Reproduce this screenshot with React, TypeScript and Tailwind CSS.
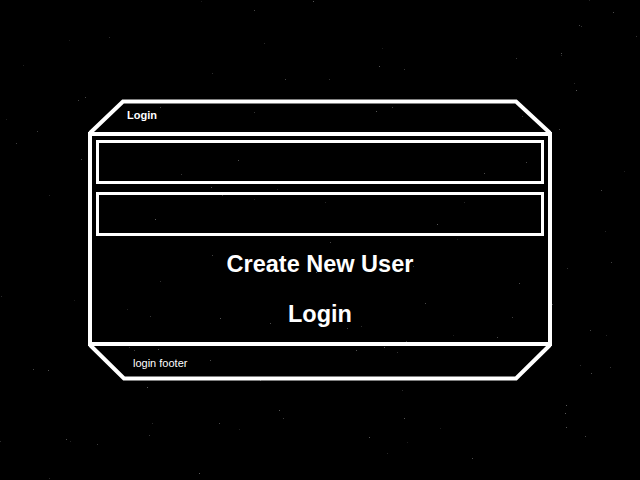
import React from 'react';

// faint star field behind the panel
function Stars() {
  const dots: { x: number; y: number; o: number }[] = [];
  let seed = 7;
  const rand = () => {
    seed = (seed * 16807) % 2147483647;
    return seed / 2147483647;
  };
  for (let i = 0; i < 120; i++) {
    dots.push({ x: Math.floor(rand() * 640), y: Math.floor(rand() * 480), o: 0.1 + rand() * 0.25 });
  }
  return (
    <svg className="pointer-events-none absolute inset-0" width="640" height="480">
      {dots.map((d, i) => (
        <rect key={i} x={d.x} y={d.y} width="1" height="1" fill="#ffffff" opacity={d.o} />
      ))}
    </svg>
  );
}

export default function App() {
  return (
    <div
      className="relative min-h-screen overflow-hidden bg-black pt-[100px] text-white"
      style={{ fontFamily: '"Liberation Sans", Arial, sans-serif' }}
    >
      <Stars />
      <div className="relative mx-auto w-[464px]">
        <div className="relative h-[32px] pl-[39px] pt-[9px]">
          <svg className="absolute inset-0 overflow-visible" width="464" height="32">
            <polyline
              points="2,33 35,1.5 428,1.5 462,33"
              fill="none"
              stroke="#ffffff"
              strokeWidth="4"
              strokeLinejoin="miter"
            />
          </svg>
          <span className="relative block text-[11px] font-bold leading-[13px]">Login</span>
        </div>

        <div className="flex h-[214px] flex-col border-4 border-white px-[4px] pt-[4px]">
          <div className="flex flex-col gap-[8px]">
            <div className="h-[44px] border-[3px] border-white" />
            <div className="h-[44px] border-[3px] border-white" />
          </div>
          <div className="mt-[14px] flex flex-col items-center gap-[22px]">
            <span className="text-[23.5px] font-bold leading-[28px]">Create New User</span>
            <span className="text-[23.5px] font-bold leading-[28px]">Login</span>
          </div>
        </div>

        <div className="relative h-[35px] pl-[45px] pt-[11px]">
          <svg className="absolute inset-0 overflow-visible" width="464" height="35">
            <polyline
              points="2,-1 36,32.5 428,32.5 462,-1"
              fill="none"
              stroke="#ffffff"
              strokeWidth="4"
              strokeLinejoin="miter"
            />
          </svg>
          <span className="relative block text-[11px] leading-[13px]">login footer</span>
        </div>
      </div>
    </div>
  );
}
